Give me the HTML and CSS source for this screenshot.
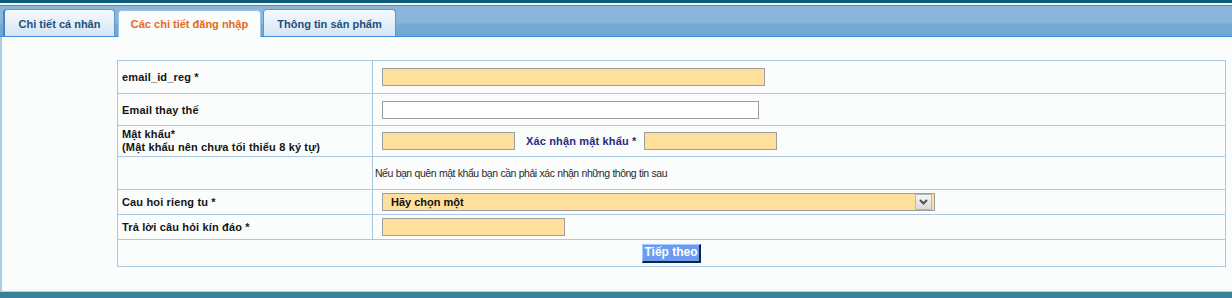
FILE: index.html
```html
<!DOCTYPE html>
<html lang="vi">
<head>
<meta charset="utf-8">
<title>Các chi tiết đăng nhập</title>
<link rel="stylesheet" href="styles.css">
</head>
<body>
<div class="page">
  <div class="topband"></div>
  <div class="tabbar">
    <div class="tab tab-personal">Chi tiết cá nhân</div>
    <div class="tab tab-active tab-login">Các chi tiết đăng nhập</div>
    <div class="tab tab-product">Thông tin sản phẩm</div>
  </div>
  <div class="content">
    <table class="form">
      <tr class="row-email">
        <td class="label">email_id_reg *</td>
        <td class="field"><input class="input req w-email" type="text"></td>
      </tr>
      <tr class="row-alt">
        <td class="label">Email thay thế</td>
        <td class="field"><input class="input w-alt" type="text"></td>
      </tr>
      <tr class="row-pass">
        <td class="label label-multi">Mật khẩu*<br>(Mật khẩu nên chưa tối thiểu 8 ký tự)</td>
        <td class="field">
          <div class="inline">
            <input class="input req w-pass" type="password">
            <span class="confirm-label">Xác nhận mật khẩu *</span>
            <input class="input req w-pass" type="password">
          </div>
        </td>
      </tr>
      <tr class="row-note">
        <td class="label"></td>
        <td class="note">Nếu bạn quên mật khẩu bạn cần phải xác nhận những thông tin sau</td>
      </tr>
      <tr class="row-question">
        <td class="label">Cau hoi rieng tu *</td>
        <td class="field">
          <div class="select">
            <span class="select-text">Hãy chọn một</span>
            <span class="select-btn"><svg width="9" height="6" viewBox="0 0 9 6"><path d="M1 1 L4.5 4.5 L8 1" fill="none" stroke="#505050" stroke-width="2"/></svg></span>
          </div>
        </td>
      </tr>
      <tr class="row-answer">
        <td class="label">Trả lời câu hỏi kín đáo *</td>
        <td class="field"><input class="input req w-answer" type="text"></td>
      </tr>
      <tr class="row-submit">
        <td class="submit" colspan="2"><button class="btn" type="button">Tiếp theo</button></td>
      </tr>
    </table>
  </div>
  <div class="footer"></div>
</div>
</body>
</html>
```
FILE: styles.css
```css
body {
  margin: 0;
  background: #ffffff;
  font-family: "Liberation Sans", Arial, sans-serif;
}

.page {
  width: 1232px;
  height: 298px;
  display: flex;
  flex-direction: column;
}

.topband {
  height: 3px;
  background: #0e5a79;
  border-bottom: 2px solid #f2f7fb;
}

.tabbar {
  height: 30px;
  border-top: 1px solid #3b8fd6;
  border-bottom: 1px solid #3b8fd6;
  background: linear-gradient(to bottom, #8bb6da 0, #89b5d9 56%, #75aad2 60%, #70a7d0 100%);
  display: flex;
  align-items: flex-end;
  padding-left: 3px;
  gap: 3px;
}

.tab {
  box-sizing: border-box;
  height: 27px;
  padding-top: 7px;
  line-height: 14px;
  text-align: center;
  font-size: 11px;
  font-weight: bold;
  color: #234f7d;
  border: 1px solid #5a98cf;
  border-bottom: none;
  border-radius: 4px 4px 0 0;
  background: linear-gradient(#f6f9fc, #d4e5f4);
  white-space: nowrap;
}

.tab-personal {
  width: 112px;
  border-left: 2px solid #4a86c0;
}

.tab-login {
  width: 143px;
}

.tab-product {
  width: 133px;
  margin-left: -1px;
}

.tab-active {
  margin-bottom: -1px;
  padding-top: 6px;
  background: #fbfdfd;
  color: #e46a1c;
  border-color: #9cc3e3;
}

.content {
  box-sizing: border-box;
  height: 254px;
  border-left: 2px solid #a8cbe6;
  background: #fbfdfd;
  padding: 23px 0 0 115px;
}

.footer {
  height: 6px;
  border-top: 1px solid #b3d3e4;
  background: #3b8199;
}

.form {
  border-collapse: collapse;
  width: 1109px;
  font-size: 11px;
  color: #141414;
}

.form td {
  border: 1px solid #a9c9e1;
  padding: 0;
  vertical-align: middle;
}

.row-email { height: 33px; }
.row-alt { height: 32px; }
.row-pass { height: 31px; }
.row-note { height: 33px; }
.row-question { height: 25px; }
.row-answer { height: 25px; }
.row-submit { height: 27px; }

.form td.label {
  width: 250px;
  padding-left: 4px;
  font-weight: bold;
  letter-spacing: 0.15px;
}

.form td.label-multi {
  line-height: 13px;
}

.form td.field {
  padding-left: 9px;
}

.form td.note {
  padding-left: 2px;
  color: #2a2a2a;
  font-size: 10.5px;
  letter-spacing: -0.5px;
  word-spacing: 0.5px;
}

.form td.submit {
  text-align: center;
}

.input {
  display: block;
  box-sizing: border-box;
  height: 18px;
  border: 1px solid #9e9e9e;
  padding: 0;
  margin: 0;
  background: #ffffff;
}

.req {
  background: #ffdf9c;
}

.w-email { width: 383px; }
.w-alt { width: 377px; }
.w-pass { width: 133px; }
.w-answer { width: 183px; }

.inline {
  display: flex;
  align-items: center;
}

.confirm-label {
  margin: 0 8px 0 11px;
  font-weight: bold;
  color: #28297e;
  letter-spacing: 0.15px;
}

.select {
  box-sizing: border-box;
  width: 553px;
  height: 18px;
  border: 1px solid #9e9e9e;
  background: #ffdf9c;
  display: flex;
  align-items: center;
  padding: 0 2px 0 8px;
  font-weight: bold;
  color: #111111;
}

.select-text {
  flex: 1;
}

.select-btn {
  box-sizing: border-box;
  width: 17px;
  height: 16px;
  border: 1px solid #b5b5b5;
  background: linear-gradient(#f6f6f6, #dadada);
  display: flex;
  align-items: center;
  justify-content: center;
}

.btn {
  font-family: "Liberation Sans", Arial, sans-serif;
  font-size: 12px;
  font-weight: bold;
  color: #ffffff;
  background: #6b9cf0;
  border-style: solid;
  border-width: 1px 2px 2px 1px;
  border-color: #a9c7ff #0d2844 #0d2844 #a9c7ff;
  padding: 0 1px;
  height: 19px;
  line-height: 15px;
  margin: 0;
  vertical-align: middle;
}
```
